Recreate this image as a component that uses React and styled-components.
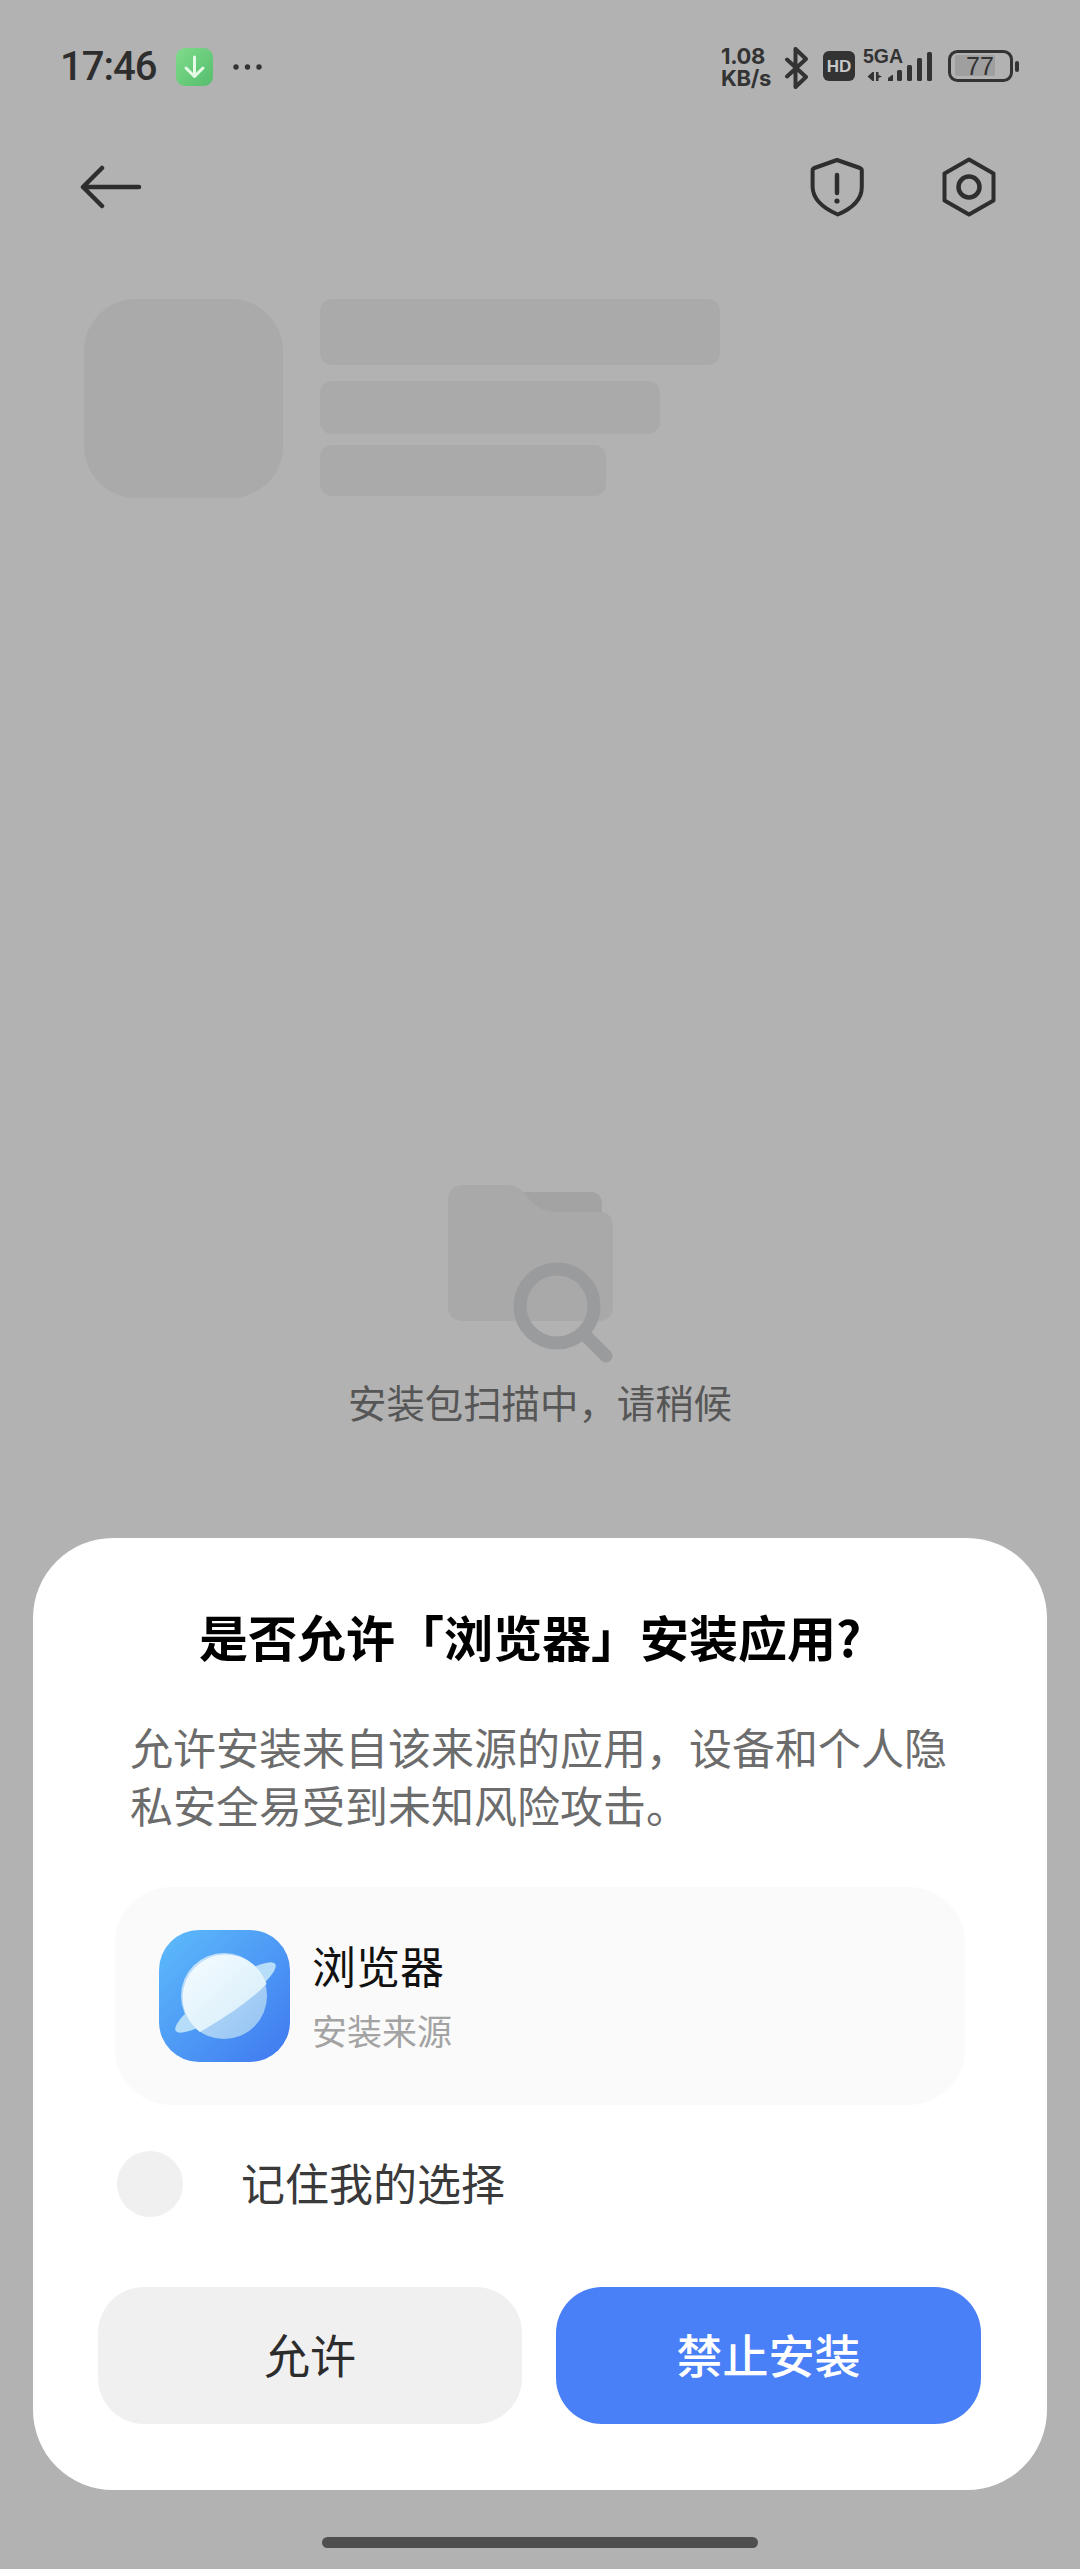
import styled, { createGlobalStyle } from 'styled-components';

const GlobalStyle = createGlobalStyle`
  html, body {
    margin: 0;
    padding: 0;
    background: #b2b2b2;
  }
  body {
    font-family: "Noto Sans CJK SC", "Liberation Sans", sans-serif;
  }
`;

const Page = styled.div`
  width: 1080px;
  height: 2569px;
  background: #b2b2b2;
  display: flex;
  flex-direction: column;
  overflow: hidden;
`;

const StatusBar = styled.div`
  height: 130px;
  padding: 47px 60px 0 60px;
  box-sizing: border-box;
  display: flex;
  justify-content: space-between;
  align-items: flex-start;
`;

const StatusLeft = styled.div`
  display: flex;
  align-items: center;
  height: 40px;
`;

const Time = styled.span`
  font-family: Roboto, "Liberation Sans", sans-serif;
  font-size: 40px;
  font-weight: 500;
  color: #2e2e2e;
  line-height: 40px;
  width: 116px;
  letter-spacing: -1px;
`;

const StatusRight = styled.div`
  display: flex;
  align-items: flex-start;
`;

const Speed = styled.div`
  font-family: Inter, "Liberation Sans", sans-serif;
  font-size: 22px;
  line-height: 22px;
  font-weight: 700;
  color: #333;
  width: 63px;
  margin-top: -2px;
  letter-spacing: -0.3px;
`;

const Toolbar = styled.div`
  height: 114px;
  padding: 0 84px 0 80px;
  display: flex;
  align-items: center;
  justify-content: space-between;
`;

const ToolIcons = styled.div`
  display: flex;
  gap: 78px;
  align-items: center;
`;

const AppHeader = styled.div`
  margin-top: 55px;
  padding-left: 84px;
  display: flex;
  gap: 37px;
`;

const SkeletonIcon = styled.div`
  width: 199px;
  height: 199px;
  border-radius: 52px;
  background: #aaaaaa;
`;

const SkeletonLines = styled.div`
  display: flex;
  flex-direction: column;
`;

const SkeletonLine = styled.div`
  width: ${(p) => p.$w}px;
  height: ${(p) => p.$h}px;
  margin-bottom: ${(p) => p.$gap}px;
  border-radius: 12px;
  background: #aaaaaa;
`;

const ScanBlock = styled.div`
  margin-top: 687px;
  display: flex;
  flex-direction: column;
  align-items: center;
`;

const ScanIcon = styled.svg`
  display: block;
  width: 180px;
  height: 180px;
  margin-left: -14px;
`;

const ScanText = styled.div`
  margin-top: 8px;
  font-size: 38.4px;
  line-height: 56px;
  color: #565656;
`;

const Sheet = styled.div`
  margin: 109px 33px 0;
  height: 952px;
  box-sizing: border-box;
  background: #fff;
  border-radius: 80px;
  padding: 0 65px 0;
  display: flex;
  flex-direction: column;
`;

const Title = styled.h2`
  margin: 68px 0 0;
  padding-right: 20px;
  height: 60px;
  font-size: 49px;
  line-height: 60px;
  font-weight: 700;
  color: #000;
  text-align: center;
  white-space: nowrap;
`;

const Desc = styled.p`
  margin: 51px 0 0;
  padding: 0 32px;
  font-size: 43px;
  line-height: 58px;
  color: #6c6c6c;
  white-space: nowrap;
`;

const SourceCard = styled.div`
  margin: 54px 17px 0;
  height: 218px;
  box-sizing: border-box;
  padding-left: 44px;
  border-radius: 56px;
  background: #fafafa;
  display: flex;
  align-items: center;
  gap: 22px;
`;

const AppIcon = styled.svg`
  display: block;
  width: 131px;
  height: 132px;
  flex: none;
`;

const SourceName = styled.div`
  font-size: 44px;
  line-height: 60px;
  color: #111;
`;

const SourceLabel = styled.div`
  margin: 11px 0 3px;
  font-size: 35px;
  line-height: 48px;
  color: #a3a3a3;
`;

const RememberRow = styled.div`
  margin: 46px 0 0 19px;
  height: 66px;
  display: flex;
  align-items: center;
  gap: 58px;
`;

const Radio = styled.div`
  width: 66px;
  height: 66px;
  border-radius: 50%;
  background: #f0f0f0;
`;

const RememberText = styled.span`
  margin-top: -5px;
  font-size: 44px;
  line-height: 60px;
  color: #3a3a3a;
`;

const Buttons = styled.div`
  margin-top: 70px;
  display: grid;
  grid-template-columns: 424px 425px;
  gap: 34px;
`;

const ActionButton = styled.button`
  height: 137px;
  border: none;
  border-radius: 46px;
  padding: 0 0 6px;
  font-family: inherit;
  font-size: 46px;
  font-weight: ${(p) => (p.$primary ? 500 : 400)};
  color: ${(p) => (p.$primary ? '#fff' : '#2c2c2c')};
  background: ${(p) => (p.$primary ? '#4a80f7' : '#f0f0f0')};
`;

const HomeBar = styled.div`
  margin: 47px auto 0;
  width: 436px;
  height: 11px;
  border-radius: 6px;
  background: #4f4f4f;
`;

const DotsSvg = styled.svg`
  margin-left: 18px;
`;

const NetworkSvg = styled.svg`
  display: block;
  margin: -6px 0 0 11px;
`;

const BatterySvg = styled.svg`
  display: block;
  margin-left: 10px;
`;

const BackIcon = () => (
  <svg width="62" height="44" viewBox="0 0 62 44" fill="none" stroke="#2e2e2e" strokeWidth="4.5" strokeLinecap="round" strokeLinejoin="round">
    <path d="M59 22H3M22 3L3 22l19 19" />
  </svg>
);

const ShieldIcon = () => (
  <svg width="54" height="60" viewBox="0 0 54 60" fill="none" stroke="#2e2e2e" strokeWidth="4" strokeLinecap="round" strokeLinejoin="round">
    <path d="M27 3l23 8c1 .4 1.8 1.2 1.8 2.4V30c0 13-11 22-24 27.5C15 52 3 43 2.6 30V13.4c0-1.2.7-2 1.8-2.4z" />
    <path d="M27 18v18" strokeWidth="4.5" />
    <circle cx="27" cy="44" r="2.6" fill="#2e2e2e" stroke="none" />
  </svg>
);

const HexIcon = () => (
  <svg width="54" height="60" viewBox="0 0 54 60" fill="none" stroke="#2e2e2e" strokeWidth="4" strokeLinejoin="round">
    <path d="M27 2.5l24.5 14v27L27 57.5l-24.5-14v-27z" />
    <circle cx="27" cy="30" r="10.5" strokeWidth="4.5" />
  </svg>
);

const DownloadBadge = () => (
  <svg width="38" height="38" viewBox="0 0 38 38">
    <defs>
      <linearGradient id="dlg" x1="0" y1="0" x2="1" y2="1">
        <stop offset="0" stopColor="#7fdc8c" />
        <stop offset="1" stopColor="#55bd6c" />
      </linearGradient>
    </defs>
    <rect width="37" height="38" rx="9" fill="url(#dlg)" />
    <path d="M18.5 9v19M10 20l8.5 8.5L27 20" fill="none" stroke="#e6fbe6" strokeWidth="3" strokeLinecap="round" strokeLinejoin="round" />
  </svg>
);

const Dots = () => (
  <DotsSvg width="30" height="8" viewBox="0 0 30 8" fill="#333">
    <circle cx="4" cy="4" r="2.7" />
    <circle cx="15.5" cy="4" r="2.7" />
    <circle cx="27" cy="4" r="2.7" />
  </DotsSvg>
);

const BluetoothIcon = () => (
  <svg width="28" height="42" viewBox="0 0 28 42" fill="none" stroke="#333" strokeWidth="4" strokeLinejoin="round" strokeLinecap="round">
    <path d="M3 29.5L22 12 11.5 2v38L22 30 3 12.5" />
  </svg>
);

const NetworkIcons = () => (
  <NetworkSvg width="112" height="46" viewBox="0 -6 112 46">
    <rect x="0" y="4" width="32" height="30" rx="6" fill="#333" />
    <text x="16" y="25" fontFamily="Liberation Sans, sans-serif" fontSize="17" fontWeight="700" fill="#c8c8c8" textAnchor="middle">HD</text>
    <text x="40" y="16" fontFamily="Liberation Sans, sans-serif" fontSize="19.5" fontWeight="700" fill="#333">5GA</text>
    <g fill="#333">
      <path d="M51 25v9h-1.500l-5-4.500 5-4.500zM53 25h2.500v3l3.500 1.500-3.500 1.500v3H53z" />
      <path d="M65 34v-3l4-3h1v6z" />
      <rect x="74" y="23" width="5" height="11" rx="1.5" />
      <rect x="84" y="18" width="5" height="16" rx="1.5" />
      <rect x="94" y="11" width="5" height="23" rx="1.5" />
      <rect x="104" y="5" width="5" height="29" rx="1.5" />
    </g>
  </NetworkSvg>
);

const Battery = () => (
  <BatterySvg width="75" height="40" viewBox="0 0 75 40">
    <rect x="4.5" y="4.5" width="62" height="29" rx="8" fill="none" stroke="#333" strokeWidth="3" />
    <rect x="10" y="8" width="40" height="21" rx="2" fill="#9f9f9f" />
    <text x="35" y="28" fontFamily="Liberation Sans, sans-serif" fontSize="25" fill="#333" textAnchor="middle">77</text>
    <rect x="70" y="14" width="4" height="11" rx="2" fill="#333" />
  </BatterySvg>
);

const App = () => {
  return (
    <Page>
      <GlobalStyle />
      <StatusBar>
        <StatusLeft>
          <Time>17:46</Time>
          <DownloadBadge />
          <Dots />
        </StatusLeft>
        <StatusRight>
          <Speed>
            1.08
            <br />
            KB/s
          </Speed>
          <BluetoothIcon />
          <NetworkIcons />
          <Battery />
        </StatusRight>
      </StatusBar>
      <Toolbar>
        <BackIcon />
        <ToolIcons>
          <ShieldIcon />
          <HexIcon />
        </ToolIcons>
      </Toolbar>
      <AppHeader>
        <SkeletonIcon />
        <SkeletonLines>
          <SkeletonLine $w={400} $h={66} $gap={16} />
          <SkeletonLine $w={340} $h={53} $gap={11} />
          <SkeletonLine $w={286} $h={51} $gap={0} />
        </SkeletonLines>
      </AppHeader>
      <ScanBlock>
        <ScanIcon viewBox="0 0 180 180">
          <path d="M60 7h88c7 0 11 5 11 12v15H60z" fill="#a3a3a3" />
          <path d="M20 0h44c8 0 13 3 19 10 8 10 16 17 30 17h43c10 0 14 6 14 15v80c0 9-6 14-14 14H20c-9 0-15-5-15-14V15C5 6 11 0 20 0z" fill="#a9a9a9" />
          <circle cx="114" cy="121" r="37" fill="none" stroke="#9a9b9d" strokeWidth="13" />
          <path d="M143 151l20 20" stroke="#9a9b9d" strokeWidth="13" strokeLinecap="round" />
        </ScanIcon>
        <ScanText>安装包扫描中，请稍候</ScanText>
      </ScanBlock>
      <Sheet>
        <Title>是否允许「浏览器」安装应用?</Title>
        <Desc>
          允许安装来自该来源的应用，设备和个人隐
          <br />
          私安全易受到未知风险攻击。
        </Desc>
        <SourceCard>
          <AppIcon viewBox="0 0 131 132">
            <defs>
              <linearGradient id="iconBg" x1="0" y1="0" x2="1" y2="1">
                <stop offset="0" stopColor="#5dbcfb" />
                <stop offset="1" stopColor="#3f78f0" />
              </linearGradient>
              <linearGradient id="planet" x1="0" y1="0" x2="1" y2="1">
                <stop offset="0" stopColor="#f6fcfe" />
                <stop offset="1" stopColor="#d3ecfa" />
              </linearGradient>
              <linearGradient id="planetLow" x1="0" y1="0" x2="1" y2="1">
                <stop offset="0" stopColor="#c7e4fa" />
                <stop offset="1" stopColor="#93c2f3" />
              </linearGradient>
            </defs>
            <rect width="131" height="132" rx="40" fill="url(#iconBg)" />
            <ellipse cx="66.5" cy="67.5" rx="60" ry="13" transform="rotate(-34 66.5 67.5)" fill="#b5dcf9" />
            <circle cx="65" cy="66" r="43" fill="url(#planetLow)" />
            <path d="M41 102A43 43 0 1 1 107.5 54Q96 66 76 80 60 91 41 102z" fill="url(#planet)" />
          </AppIcon>
          <div>
            <SourceName>浏览器</SourceName>
            <SourceLabel>安装来源</SourceLabel>
          </div>
        </SourceCard>
        <RememberRow>
          <Radio />
          <RememberText>记住我的选择</RememberText>
        </RememberRow>
        <Buttons>
          <ActionButton>允许</ActionButton>
          <ActionButton $primary>禁止安装</ActionButton>
        </Buttons>
      </Sheet>
      <HomeBar />
    </Page>
  );
};

export default App;
